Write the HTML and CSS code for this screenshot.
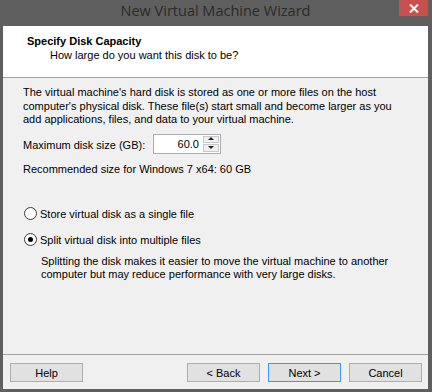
FILE: index.html
```html
<!DOCTYPE html>
<html lang="en">
<head>
  <meta charset="UTF-8" />
  <title>New Virtual Machine Wizard</title>
  <link rel="stylesheet" href="styles.css">
</head>
<body>

  <div class="window">
    <div class="titlebar">
      <span></span>
      <span class="title">New Virtual Machine Wizard</span>
      <button class="close" type="button" aria-label="Close">
        <svg width="10" height="9" viewBox="0 0 10 9">
          <path d="M1 0.5 L9 8.5 M9 0.5 L1 8.5" stroke="#fff" stroke-width="2"/>
        </svg>
      </button>
    </div>

    <div class="client">
      <!-- wizard page header -->
      <div class="page-head">
        <div class="page-title">Specify Disk Capacity</div>
        <div class="page-sub">How large do you want this disk to be?</div>
      </div>

      <div class="page-body">
        <p class="intro">
          The virtual machine's hard disk is stored as one or more files on the host<br>
          computer's physical disk. These file(s) start small and become larger as you<br>
          add applications, files, and data to your virtual machine.
        </p>

        <div class="size-row">
          <label for="diskSize">Maximum disk size (GB):</label>
          <div class="spin">
            <input type="text" id="diskSize" value="60.0">
            <div class="spin-btns">
              <span class="spin-up"></span>
              <span class="spin-down"></span>
            </div>
          </div>
        </div>

        <div class="hint">Recommended size for Windows 7 x64: 60 GB</div>

        <label class="radio first">
          <span class="dot"></span>
          Store virtual disk as a single file
        </label>
        <label class="radio checked">
          <span class="dot"></span>
          Split virtual disk into multiple files
        </label>
        <p class="radio-note">
          Splitting the disk makes it easier to move the virtual machine to another<br>
          computer but may reduce performance with very large disks.
        </p>
      </div>

      <div class="page-foot">
        <button type="button" class="btn">Help</button>
        <span class="spacer"></span>
        <button type="button" class="btn">&lt; Back</button>
        <button type="button" class="btn default">Next &gt;</button>
        <button type="button" class="btn">Cancel</button>
      </div>
    </div>
  </div>

</body>
</html>
```

FILE: styles.css
```css
html, body {
  margin: 0;
  padding: 0;
}

body {
  font-family: 'Liberation Sans', Arial, sans-serif;
  font-size: 11px;
  color: #000;
  background: #5f5f5f;
}

.window {
  width: 432px;
  height: 392px;
  box-sizing: border-box;
  display: flex;
  flex-direction: column;
  background: #5f5f5f;
  padding: 0 4px 3px 3px;
}

.titlebar {
  height: 26px;
  display: grid;
  grid-template-columns: 1fr auto 1fr;
  align-items: start;
}

.title {
  font-family: 'Open Sans', 'Liberation Sans', sans-serif;
  font-size: 14.5px;
  line-height: 22px;
  color: #2b2b2b;
}

.close {
  justify-self: end;
  width: 29px;
  height: 16px;
  border: none;
  padding: 0;
  margin: 0;
  background: #c75050;
  display: flex;
  align-items: center;
  justify-content: center;
}

.client {
  flex: 1;
  display: flex;
  flex-direction: column;
  background: #f0f0f0;
}

.page-head {
  height: 52px;
  box-sizing: border-box;
  background: #fff;
  border-bottom: 1px solid #a0a0a0;
  padding: 8px 0 0 24px;
  line-height: 14px;
}

.page-title {
  font-weight: bold;
}

.page-sub {
  padding-left: 23px;
}

.page-body {
  flex: 1;
  padding: 8px 20px 0 20px;
}

.intro {
  margin: 0;
  line-height: 13.5px;
}

.size-row {
  display: flex;
  align-items: center;
  margin-top: 7px;
  height: 20px;
}

.size-row label {
  width: 130px;
  padding-top: 2px;
}

.spin {
  display: flex;
  width: 68px;
  height: 20px;
  box-sizing: border-box;
  border: 1px solid #abadb3;
  background: #fff;
}

.spin input {
  flex: 1;
  width: 0;
  border: none;
  outline: none;
  padding: 0 4px 0 0;
  margin: 0;
  font: inherit;
  text-align: right;
  background: transparent;
}

.spin-btns {
  width: 16px;
  display: flex;
  flex-direction: column;
  padding: 1px 1px 1px 0;
  gap: 1px;
}

.spin-up,
.spin-down {
  flex: 1;
  border: 1px solid #c9c9c9;
  background: #f0f0f0;
  position: relative;
}

.spin-up::after,
.spin-down::after {
  content: "";
  position: absolute;
  left: 50%;
  top: 50%;
  margin: -2px 0 0 -3px;
  border-left: 3px solid transparent;
  border-right: 3px solid transparent;
}

.spin-up::after {
  border-bottom: 3px solid #222;
}

.spin-down::after {
  border-top: 3px solid #222;
}

.hint {
  margin-top: 8px;
  line-height: 14px;
}

.radio {
  display: flex;
  align-items: center;
  gap: 3px;
  height: 14px;
  line-height: 14px;
  margin-top: 12px;
  margin-left: 1px;
}

.radio.first {
  margin-top: 31px;
}

.dot {
  width: 13px;
  height: 13px;
  box-sizing: border-box;
  border: 1px solid #3c3c3c;
  border-radius: 50%;
  background: #fff;
  display: flex;
  align-items: center;
  justify-content: center;
}

.radio.checked .dot::after {
  content: "";
  width: 5px;
  height: 5px;
  border-radius: 50%;
  background: #000;
}

.radio-note {
  margin: 8px 0 0 18px;
  line-height: 13.5px;
}

.page-foot {
  display: flex;
  gap: 8px;
  border-top: 1px solid #a0a0a0;
  padding: 8px 6px 7px 7px;
}

.spacer {
  flex: 1;
}

.btn {
  width: 73px;
  height: 19px;
  padding: 0;
  font: inherit;
  color: #000;
  background: #e1e1e1;
  border: 1px solid #adadad;
}

.btn.default {
  border-color: #3399ff;
}
```
